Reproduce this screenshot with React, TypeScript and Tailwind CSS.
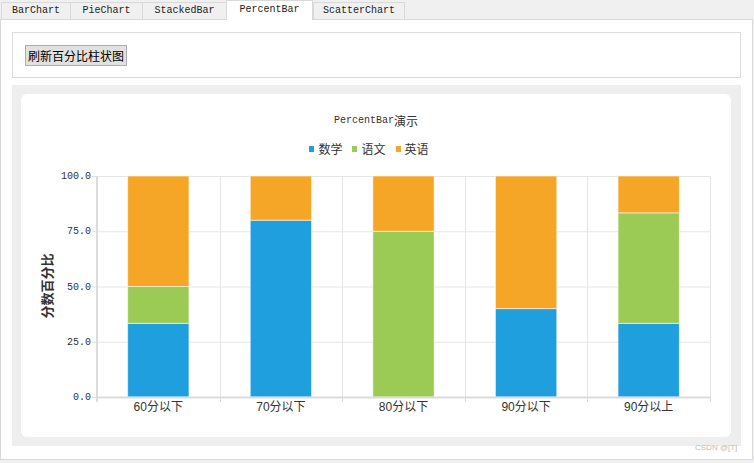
import React from "react";

const BLUE = "#209fde";
const GREEN = "#9bcb55";
const ORANGE = "#f5a627";

const cats = [
  { name: "60分以下", v: [33.333, 16.667, 50] },
  { name: "70分以下", v: [80, 0, 20] },
  { name: "80分以下", v: [0, 75, 25] },
  { name: "90分以下", v: [40, 0, 60] },
  { name: "90分以上", v: [33.333, 50, 16.667] },
];
const colors = [BLUE, GREEN, ORANGE];

const X0 = 76;
const X1 = 689;
const YT = 19;
const YB = 240;
const H = YB - YT;
const CW = (X1 - X0) / 5;

function Chart() {
  const yTicks = [0, 25, 50, 75, 100];
  return (
    <svg width={710} height={280} className="block">
      {yTicks.map((t) => {
        const y = YB - (t / 100) * H;
        return <line key={t} x1={X0} x2={X1} y1={y + 0.5} y2={y + 0.5} stroke="#e6e6e6" strokeWidth={1} />;
      })}
      {[0, 1, 2, 3, 4, 5].map((i) => {
        const x = Math.round(X0 + CW * i) + 0.5;
        return <line key={i} x1={x} x2={x} y1={YT} y2={YB} stroke="#e6e6e6" strokeWidth={1} />;
      })}
      {cats.map((c, i) => {
        const bx = X0 + CW * i + CW / 4;
        const bw = CW / 2;
        let acc = 0;
        return (
          <g key={c.name}>
            {c.v.map((v, j) => {
              if (v <= 0) return null;
              const yTop = YB - ((acc + v) / 100) * H;
              const h = (v / 100) * H;
              acc += v;
              return (
                <rect
                  key={j}
                  x={bx}
                  y={yTop}
                  width={bw}
                  height={h}
                  fill={colors[j]}
                  stroke="rgba(255,255,255,0.55)"
                  strokeWidth={1}
                />
              );
            })}
            <text
              x={X0 + CW * i + CW / 2}
              y={251}
              textAnchor="middle"
              dominantBaseline="middle"
              fontSize={12}
              fill="#333"
              fontFamily='"Liberation Sans", "Noto Sans CJK SC", sans-serif'
            >
              {c.name}
            </text>
          </g>
        );
      })}
      {/* axes */}
      <line x1={X0} x2={X0} y1={YT} y2={YB + 5} stroke="#dcdcdc" strokeWidth={2} />
      <line x1={X0} x2={X1 + 1} y1={YB + 0.5} y2={YB + 0.5} stroke="#dcdcdc" strokeWidth={2} />
      {[0, 1, 2, 3, 4, 5].map((i) => {
        const x = Math.round(X0 + CW * i) + 0.5;
        return <line key={i} x1={x} x2={x} y1={YB} y2={YB + 5} stroke="#dcdcdc" strokeWidth={1} />;
      })}
      {yTicks.map((t) => {
        const y = YB - (t / 100) * H;
        return (
          <g key={t}>
            <line x1={X0 - 5} x2={X0} y1={y + 0.5} y2={y + 0.5} stroke="#dcdcdc" strokeWidth={1} />
            <text
              x={X0 - 6}
              y={y + 0.5}
              textAnchor="end"
              dominantBaseline="middle"
              fontSize={10}
              fill="#333"
              fontFamily='"Liberation Mono", monospace'
            >
              {t.toFixed(1)}
            </text>
          </g>
        );
      })}
      <text
        x={0}
        y={0}
        transform="translate(27,129) rotate(-90)"
        textAnchor="middle"
        dominantBaseline="middle"
        fontSize={13}
        fontWeight={700}
        fill="#333"
        fontFamily='"Noto Sans CJK SC", sans-serif'
      >
        分数百分比
      </text>
    </svg>
  );
}

const tabs = [
  { label: "BarChart", w: "w-[69px]" },
  { label: "PieChart", w: "w-[72px]" },
  { label: "StackedBar", w: "w-[84px]" },
  { label: "PercentBar", w: "w-[87px]", sel: true },
  { label: "ScatterChart", w: "w-[92px]" },
];

export default function App() {
  return (
    <div className="relative w-[754px] h-[463px] bg-[#f0f0f0] overflow-hidden font-['Liberation_Mono',monospace] text-[#222]">
      <div className="flex items-end h-[19px] pl-[1px]">
        {tabs.map((t, i) =>
          t.sel ? (
            <div
              key={t.label}
              className={`${t.w} h-[20px] -mb-[1px] relative z-10 bg-white border border-b-0 border-[#d9d9d9] flex items-center justify-center text-[10px] leading-none pb-[1px]`}
            >
              {t.label}
            </div>
          ) : (
            <div
              key={t.label}
              className={`${t.w} h-[17px] border-t border-l ${i === tabs.length - 1 ? "border-r" : ""} border-[#d9d9d9] bg-[#f0f0f0] flex items-center justify-center text-[10px] leading-none`}
            >
              {t.label}
            </div>
          )
        )}
      </div>
      <div className="w-[753px] h-[441px] bg-white border border-[#d9d9d9] pt-[12px] pl-[11px] box-border flex flex-col">
        <div className="w-[729px] h-[46px] border border-[#dcdcdc] pl-[12px] pt-[12px] box-border">
          <div className="w-[102px] h-[21px] bg-[#e1e1e1] border border-[#adadad] flex items-center justify-center text-[12px] leading-none text-black font-['Noto_Sans_CJK_SC',sans-serif]">
            刷新百分比柱状图
          </div>
        </div>
        <div className="mt-[7px] w-[729px] h-[361px] bg-[#eeeeee] p-[9px] box-border">
          <div className="w-[710px] h-[343px] bg-white rounded-[6px] flex flex-col pt-[20px]">
            <div className="h-[14px] flex items-center justify-center text-[#333] leading-none">
              <span className="text-[10px]">PercentBar</span>
              <span className="text-[12px] font-['Noto_Sans_CJK_SC',sans-serif]">演示</span>
            </div>
            <div className="mt-[13px] h-[16px] flex items-center justify-center gap-[10px] pr-[14px] text-[12px] text-[#333] font-['Noto_Sans_CJK_SC',sans-serif] leading-none">
              {[
                ["数学", "bg-[#209fde]"],
                ["语文", "bg-[#9bcb55]"],
                ["英语", "bg-[#f5a627]"],
              ].map(([n, c]) => (
                <div key={n} className="flex items-center gap-[4px]">
                  <span className={`w-[5px] h-[6px] ${c}`} />
                  <span>{n}</span>
                </div>
              ))}
            </div>
            <Chart />
          </div>
        </div>
      </div>
      <div className="absolute left-[695px] top-[444px] text-[8px] leading-none text-[#bdbdbd] font-['Liberation_Sans',sans-serif]">
        CSDN @[T]
      </div>
    </div>
  );
}
